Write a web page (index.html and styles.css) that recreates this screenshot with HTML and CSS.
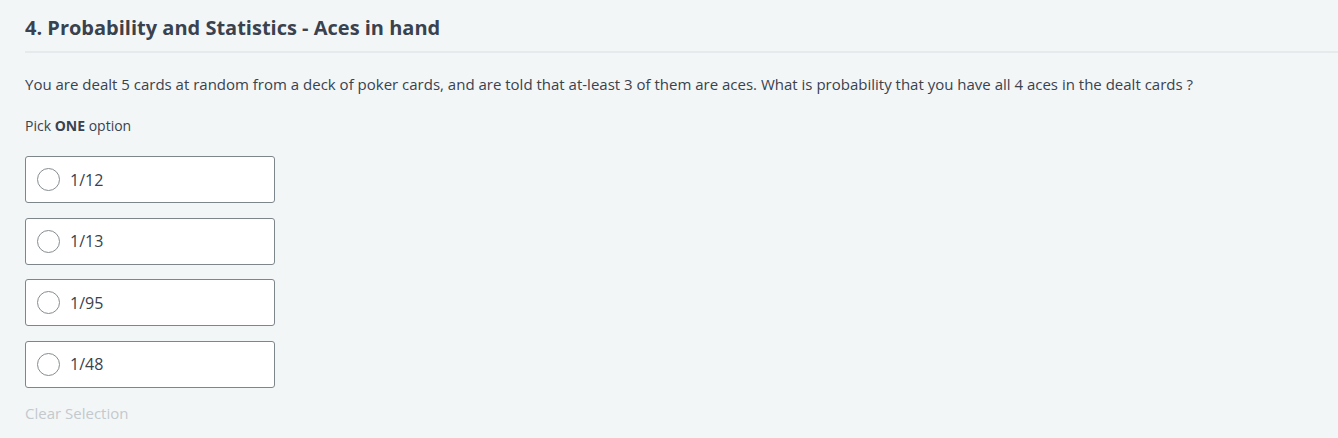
FILE: index.html
```html
<!DOCTYPE html>
<html>
<head>
<meta charset="utf-8">
<link rel="stylesheet" href="styles.css">
</head>
<body>
<div class="page">
  <div class="header">
    <h1 class="title">4. Probability and Statistics - Aces in hand</h1>
  </div>
  <div class="body">
    <p class="question">You are dealt 5 cards at random from a deck of poker cards, and are told that at-least 3 of them are aces. What is probability that you have all 4 aces in the dealt cards ?</p>
    <p class="pick">Pick <strong>ONE</strong> option</p>
    <div class="options">
      <label class="option"><span class="radio"></span><span class="opt-text">1/12</span></label>
      <label class="option"><span class="radio"></span><span class="opt-text">1/13</span></label>
      <label class="option"><span class="radio"></span><span class="opt-text">1/95</span></label>
      <label class="option"><span class="radio"></span><span class="opt-text">1/48</span></label>
    </div>
    <div class="clear">Clear Selection</div>
  </div>
</div>
</body>
</html>
```

FILE: styles.css
```css
html, body {
  margin: 0;
  padding: 0;
  background: #f3f6f7;
}
body {
  font-family: "Open Sans", "Liberation Sans", sans-serif;
  color: #39424e;
}
.page {
  padding-left: 25px;
}
.header {
  height: 51px;
  border-bottom: 2px solid #e6eaec;
  display: flex;
  align-items: center;
}
.title {
  margin: 0;
  font-size: 20px;
  font-weight: 700;
  color: #39424e;
  line-height: 1;
  padding-top: 4px;
}
.body {
  padding-top: 21px;
}
.question {
  margin: 0;
  font-size: 15px;
  line-height: 20px;
  color: #39424e;
}
.pick {
  margin: 22px 0 0;
  font-size: 14px;
  line-height: 20px;
  color: #39424e;
}
.pick strong {
  font-weight: 700;
}
.options {
  display: flex;
  flex-direction: column;
  gap: 14.67px;
  margin-top: 20px;
}
.option {
  box-sizing: border-box;
  width: 250px;
  height: 47px;
  border: 1px solid #7d868b;
  border-radius: 3px;
  background: #fff;
  display: flex;
  align-items: center;
  padding-left: 11px;
  gap: 10px;
}
.radio {
  box-sizing: border-box;
  width: 23px;
  height: 23px;
  border: 1px solid #858d92;
  border-radius: 50%;
  background: #fff;
}
.opt-text {
  font-size: 16px;
  color: #39424e;
}
.clear {
  margin-top: 15px;
  font-size: 15px;
  color: #c3c9cd;
}
```
